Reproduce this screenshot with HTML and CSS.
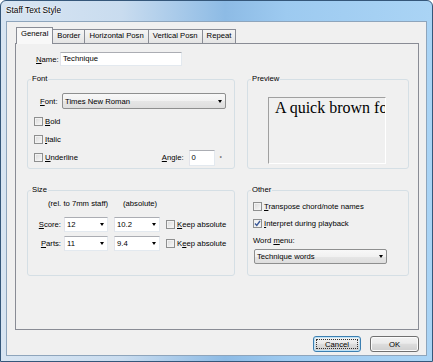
FILE: index.html
```html
<!DOCTYPE html>
<html lang="en">
<head>
    <meta charset="UTF-8">
    <title>Staff Text Style</title>
    <link rel="stylesheet" href="styles.css">
</head>
<body>
    <div class="window">
        <div class="titlebar">Staff Text Style</div>
        <div class="client">
            <div class="tabs">
                <div class="tab active">General</div>
                <div class="tab">Border</div>
                <div class="tab">Horizontal Posn</div>
                <div class="tab">Vertical Posn</div>
                <div class="tab">Repeat</div>
            </div>

            <div class="panel">
                <div class="name-row">
                    <label class="name-label"><u>N</u>ame:</label>
                    <div class="textbox name-box">Technique</div>
                </div>

                <div class="groups">
                    <div class="group">
                        <div class="group-title">Font</div>
                        <div class="font-row">
                            <label class="font-label"><u>F</u>ont:</label>
                            <div class="dropdown font-select">Times New Roman<span class="arrow"></span></div>
                        </div>
                        <div class="checks font-checks">
                            <div class="check-row"><span class="checkbox"></span><span><u>B</u>old</span></div>
                            <div class="check-row"><span class="checkbox"></span><span><u>I</u>talic</span></div>
                            <div class="check-row">
                                <span class="checkbox"></span><span><u>U</u>nderline</span>
                                <span class="angle">
                                    <label><u>A</u>ngle:</label>
                                    <span class="textbox angle-box">0</span>
                                    <span class="deg">°</span>
                                </span>
                            </div>
                        </div>
                    </div>

                    <div class="group">
                        <div class="group-title">Preview</div>
                        <div class="preview">A quick brown fox jumps</div>
                    </div>

                    <div class="group">
                        <div class="group-title">Size</div>
                        <div class="size-head">
                            <span class="rel">(rel. to 7mm staff)</span>
                            <span>(absolute)</span>
                        </div>
                        <div class="size-rows">
                            <div class="size-row">
                                <label class="size-label"><u>S</u>core:</label>
                                <div class="combo combo-rel">12<span class="arrow"></span></div>
                                <div class="combo combo-abs">10.2<span class="arrow"></span></div>
                                <span class="checkbox"></span><span><u>K</u>eep absolute</span>
                            </div>
                            <div class="size-row">
                                <label class="size-label"><u>P</u>arts:</label>
                                <div class="combo combo-rel">11<span class="arrow"></span></div>
                                <div class="combo combo-abs">9.4<span class="arrow"></span></div>
                                <span class="checkbox"></span><span>K<u>e</u>ep absolute</span>
                            </div>
                        </div>
                    </div>

                    <div class="group">
                        <div class="group-title">Other</div>
                        <div class="checks other-checks">
                            <div class="check-row"><span class="checkbox"></span><span><u>T</u>ranspose chord/note names</span></div>
                            <div class="check-row">
                                <span class="checkbox checked">
                                    <svg width="7" height="7" viewBox="0 0 7 7"><path d="M1 3.5 L2.8 5.5 L6 1" fill="none" stroke="#3c5a98" stroke-width="1.4"/></svg>
                                </span>
                                <span><u>I</u>nterpret during playback</span>
                            </div>
                        </div>
                        <div class="word-label">Word <u>m</u>enu:</div>
                        <div class="dropdown word-select">Technique words<span class="arrow"></span></div>
                    </div>
                </div>
            </div>

            <div class="buttons">
                <button class="btn default"><span class="btn-face">Cancel</span></button>
                <button class="btn"><span class="btn-face">OK</span></button>
            </div>
        </div>
    </div>
</body>
</html>
```

FILE: styles.css
```css
* {
    box-sizing: border-box;
}

body {
    margin: 0;
    font-family: "Liberation Sans", Arial, sans-serif;
    font-size: 7.7px;
    color: #000;
    background: #fff;
}

u {
    text-decoration-thickness: 1px;
    text-underline-offset: 1px;
}

/* window frame */
.window {
    width: 433px;
    height: 362px;
    border: 1px solid #35577a;
    border-radius: 6px 6px 0 0;
    padding: 0 5px 5px;
    display: flex;
    flex-direction: column;
    background: linear-gradient(to right, #d8e5f2 0%, #c9dcef 28%, #8dbbe5 52%, #9dcaf0 66%, #aad4f5 100%);
}

.titlebar {
    height: 20px;
    line-height: 19px;
    font-size: 8.3px;
    text-shadow: 0 0 3px #fff, 0 0 2px #fff;
}

.client {
    flex: 1;
    background: #f0f0f0;
    border: 1px solid #8ea5bc;
    padding: 5px 7px 0 8px;
    display: flex;
    flex-direction: column;
}

/* tabs */
.tabs {
    display: flex;
    align-items: flex-end;
    height: 16px;
    margin-left: 1px;
}

.tab {
    height: 14px;
    line-height: 11px;
    padding: 0 4px;
    margin-right: -1px;
    border: 1px solid #898c95;
    border-bottom: none;
    background: linear-gradient(#f5f5f5, #e4e4e4);
}

.tab.active {
    height: 17px;
    line-height: 12px;
    margin-bottom: -1px;
    background: #f8f8f8;
    position: relative;
    z-index: 1;
}

.panel {
    height: 287px;
    border: 1px solid #898c95;
    padding: 8px 9px 0 11px;
}

/* inputs */
.textbox,
.combo {
    background: #fff;
    border: 1px solid;
    border-color: #abadb3 #e3e9ef #e3e9ef #e2e3ea;
}

.name-row {
    display: flex;
    align-items: center;
    height: 14px;
    margin-left: 9px;
}

.name-label {
    width: 24px;
}

.name-box {
    width: 122px;
    height: 14px;
    line-height: 12px;
    padding: 0 2px;
}

.arrow {
    margin-left: auto;
    width: 0;
    height: 0;
    border-left: 2.5px solid transparent;
    border-right: 2.5px solid transparent;
    border-top: 3px solid #000;
}

.dropdown {
    display: flex;
    align-items: center;
    height: 16px;
    padding: 0 3px 0 2px;
    border: 1px solid #8e8f8f;
    border-radius: 2px;
    background: linear-gradient(#f8f8f8 0%, #f1f1f1 50%, #e6e6e6 50%, #dedede 100%);
}

.combo {
    display: flex;
    align-items: center;
    height: 15px;
    padding: 0 3px 0 2px;
}

/* group boxes */
.groups {
    display: grid;
    grid-template-columns: 208px 162px;
    grid-template-rows: 90px 86px;
    column-gap: 12px;
    row-gap: 21px;
    margin-top: 13px;
}

.group {
    border: 1px solid #d5dfe5;
    border-radius: 3px;
}

.group-title {
    width: max-content;
    margin: -6px 0 0 3px;
    padding: 0 1px;
    line-height: 10px;
    background: #f0f0f0;
}

.font-row {
    display: flex;
    align-items: center;
    gap: 4px;
    margin: 9px 0 0 12px;
}

.font-label {
    width: 18px;
}

.font-select {
    width: 164px;
}

.checks {
    display: flex;
    flex-direction: column;
}

.check-row {
    display: flex;
    align-items: center;
    gap: 2px;
    height: 9px;
}

.checkbox {
    flex: none;
    display: flex;
    align-items: center;
    justify-content: center;
    width: 9px;
    height: 9px;
    border: 1px solid #8e8f8f;
    background: linear-gradient(135deg, #d9d9d9, #f9f9f9);
    box-shadow: inset 0 0 0 1px #f2f2f2;
}

.checkbox.checked {
    background: #f4f4f4;
}

.font-checks {
    gap: 9px;
    margin: 8px 0 0 6px;
}

.angle {
    display: flex;
    align-items: center;
    margin: 0 12px 0 auto;
}

.angle-box {
    width: 26px;
    height: 16px;
    line-height: 14px;
    margin-left: 5px;
    padding: 0 2px;
}

.deg {
    margin-left: 5px;
    font-size: 6px;
}

.preview {
    width: 118px;
    height: 67px;
    margin: 13px 0 0 20px;
    padding: 1px 0 0 6px;
    border: 1px solid;
    border-color: #a0a0a0 #fff #fff #a0a0a0;
    font-family: "Liberation Serif", "Times New Roman", serif;
    font-size: 16px;
    line-height: 18px;
    white-space: nowrap;
    overflow: hidden;
}

/* size */
.size-head {
    display: flex;
    line-height: 10px;
    margin: 4px 0 0 20px;
}

.rel {
    width: 75px;
}

.size-rows {
    display: flex;
    flex-direction: column;
    gap: 4px;
    margin-top: 8px;
}

.size-row {
    display: flex;
    align-items: center;
    gap: 2px;
    height: 15px;
    margin-left: 7px;
}

.size-label {
    width: 26px;
    margin-right: 1px;
    text-align: right;
}

.combo-rel {
    width: 44px;
    margin-right: 4px;
}

.combo-abs {
    width: 46px;
    margin-right: 4px;
}

/* other */
.other-checks {
    gap: 8px;
    margin: 7px 0 0 5px;
}

.word-label {
    line-height: 10px;
    margin: 8px 0 0 5px;
}

.word-select {
    width: 133px;
    height: 15px;
    margin: 3px 0 0 6px;
}

/* buttons */
.buttons {
    display: flex;
    justify-content: flex-end;
    gap: 9px;
    margin-top: 6px;
}

.btn {
    width: 48px;
    height: 16px;
    padding: 0;
    font: inherit;
    color: #000;
    border: 1px solid #707070;
    border-radius: 3px;
    background: linear-gradient(#f2f2f2 0%, #ebebeb 45%, #dddddd 50%, #cfcfcf 100%);
    box-shadow: inset 0 0 0 1px #fbfbfb;
}

.btn + .btn {
    width: 49px;
}

.btn-face {
    display: flex;
    align-items: center;
    justify-content: center;
    height: 100%;
}

.btn.default {
    border-color: #3c7fb1;
    box-shadow: inset 0 0 0 1px #bfe3f7;
}

.btn.default .btn-face {
    height: 10px;
    margin: 2px;
    border: 1px dotted #333;
}
```
